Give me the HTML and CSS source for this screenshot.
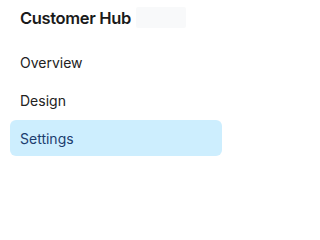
FILE: index.html
```html
<!DOCTYPE html>
<html>
<head>
<meta charset="utf-8">
<link rel="stylesheet" href="styles.css">
</head>
<body>
<aside class="sidebar">
  <div class="brand">
    <span class="brand-name">Customer Hub</span>
    <span class="brand-slot"></span>
  </div>
  <nav class="nav">
    <a class="nav-item">Overview</a>
    <a class="nav-item">Design</a>
    <a class="nav-item active">Settings</a>
  </nav>
</aside>
</body>
</html>
```

FILE: styles.css
```css
html, body {
  margin: 0;
  background: #ffffff;
}
body {
  font-family: Inter, "Noto Sans", sans-serif;
  color: #1f1f1f;
}
.sidebar {
  width: 212px;
  padding: 7px 12px 0 10px;
}
.brand {
  display: flex;
  align-items: center;
  gap: 5px;
  padding-left: 10px;
  height: 21px;
}
.brand-name {
  font-size: 16.5px;
  font-weight: 600;
  color: #1a1a1a;
  letter-spacing: -0.35px;
  line-height: 21px;
  padding-top: 1px;
}
.brand-slot {
  width: 50px;
  height: 21px;
  background: #f8f9fa;
  border-radius: 2px;
}
.nav {
  display: flex;
  flex-direction: column;
  gap: 2px;
  margin-top: 16px;
}
.nav-item {
  display: flex;
  align-items: center;
  height: 36px;
  padding: 0 10px;
  font-size: 14px;
  color: #222222;
  border-radius: 6px;
}
.nav-item.active {
  background: #cdeefe;
  color: #1c3d6e;
}
```
